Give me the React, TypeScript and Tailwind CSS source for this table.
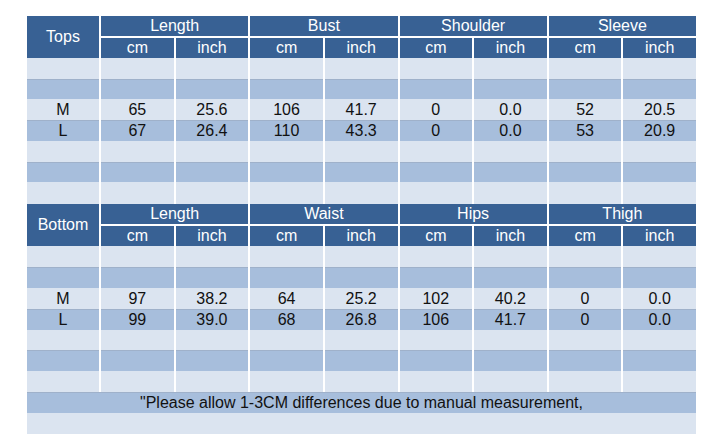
import React from "react";

const HEAD = "bg-[#386194]";
const LIGHT = "bg-[#dbe4f0]";
const DARK = "bg-[#a7bedc]";

type Row = { cells: string[]; dark: boolean; h: number };

function Header({ title, groups }: { title: string; groups: string[] }) {
  return (
    <div className="flex gap-[2px]">
      <div className={`w-[72px] h-[42px] ${HEAD} flex items-center justify-center text-white`}>{title}</div>
      {groups.map((g) => (
        <div key={g} className="flex-1 flex flex-col gap-[2px]">
          <div className={`h-[20px] ${HEAD} flex items-center justify-center text-white`}>{g}</div>
          <div className="flex gap-[2px]">
            <div className={`flex-1 h-[20px] ${HEAD} flex items-center justify-center text-white`}>cm</div>
            <div className={`flex-1 h-[20px] ${HEAD} flex items-center justify-center text-white`}>inch</div>
          </div>
        </div>
      ))}
    </div>
  );
}

function DataRow({ row }: { row: Row }) {
  const bg = row.dark ? DARK : LIGHT;
  return (
    <div className="flex gap-[2px]" style={{ height: row.h }}>
      {row.cells.map((c, i) => (
        <div
          key={i}
          className={`${i === 0 ? "w-[72px]" : "flex-1"} ${bg} ${row.dark ? "border-t border-[#9fb1ca]" : ""} flex items-center justify-center text-[#111]`}
        >
          {c}
        </div>
      ))}
    </div>
  );
}

const empty = ["", "", "", "", "", "", "", "", ""];

const topsRows: Row[] = [
  { cells: empty, dark: false, h: 21 },
  { cells: empty, dark: true, h: 20 },
  { cells: ["M", "65", "25.6", "106", "41.7", "0", "0.0", "52", "20.5"], dark: false, h: 21 },
  { cells: ["L", "67", "26.4", "110", "43.3", "0", "0.0", "53", "20.9"], dark: true, h: 21 },
  { cells: empty, dark: false, h: 21 },
  { cells: empty, dark: true, h: 20 },
  { cells: empty, dark: false, h: 22 },
];

const bottomRows: Row[] = [
  { cells: empty, dark: false, h: 21 },
  { cells: empty, dark: true, h: 21 },
  { cells: ["M", "97", "38.2", "64", "25.2", "102", "40.2", "0", "0.0"], dark: false, h: 21 },
  { cells: ["L", "99", "39.0", "68", "26.8", "106", "41.7", "0", "0.0"], dark: true, h: 21 },
  { cells: empty, dark: false, h: 20 },
  { cells: empty, dark: true, h: 21 },
  { cells: empty, dark: false, h: 21 },
];

export default function App() {
  return (
    <div
      className="w-[721px] h-[444px] bg-white pl-[27px] pt-[16px] text-[16px] leading-none"
      style={{ fontFamily: '"Liberation Sans", Arial, sans-serif' }}
    >
      <div className="w-[669px] flex flex-col">
        <Header title="Tops" groups={["Length", "Bust", "Shoulder", "Sleeve"]} />
        {topsRows.map((r, i) => (
          <DataRow key={i} row={r} />
        ))}
        <Header title="Bottom" groups={["Length", "Waist", "Hips", "Thigh"]} />
        {bottomRows.map((r, i) => (
          <DataRow key={i} row={r} />
        ))}
        <div className={`h-[21px] ${DARK} border-t border-[#9fb1ca] flex items-center justify-center text-[#111]`}>
          "Please allow 1-3CM differences due to manual measurement,
        </div>
        <div className={`h-[21px] ${LIGHT}`}></div>
      </div>
    </div>
  );
}
